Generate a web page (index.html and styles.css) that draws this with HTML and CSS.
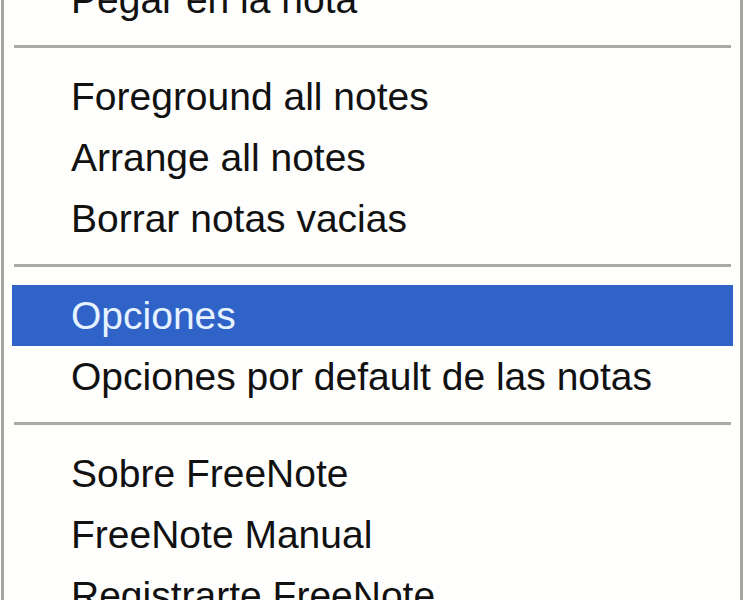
FILE: index.html
```html
<!DOCTYPE html>
<html lang="es">
<head>
<meta charset="utf-8">
<title>FreeNote menu</title>
<link rel="stylesheet" href="styles.css">
</head>
<body>
<div class="menu">
  <div class="item">Pegar en la nota</div>
  <div class="sep"></div>
  <div class="item">Foreground all notes</div>
  <div class="item">Arrange all notes</div>
  <div class="item">Borrar notas vacias</div>
  <div class="sep"></div>
  <div class="item selected">Opciones</div>
  <div class="item">Opciones por default de las notas</div>
  <div class="sep"></div>
  <div class="item">Sobre FreeNote</div>
  <div class="item">FreeNote Manual</div>
  <div class="item">Registrarte FreeNote</div>
</div>
</body>
</html>
```
FILE: styles.css
```css
html, body {
  margin: 0;
  padding: 0;
  background: #ffffff;
  overflow: hidden;
  height: 600px;
}

.menu {
  margin: -31px 2px 0 1px;
  border-left: 3px solid #a6a6a2;
  border-right: 3px solid #a6a6a2;
  padding: 0 7px 0 8px;
  background: #fefefd;
  display: flex;
  flex-direction: column;
  font-family: "Liberation Sans", Arial, sans-serif;
  font-size: 39px;
  color: #111111;
}

.item {
  height: 61px;
  line-height: 61px;
  padding-left: 59px;
  white-space: nowrap;
}

.item.selected {
  background: #2f63c7;
  color: #e6f2ff;
}

.sep {
  height: 3px;
  margin: 15px 2px 18px;
  background: #aaaaa6;
}
```
